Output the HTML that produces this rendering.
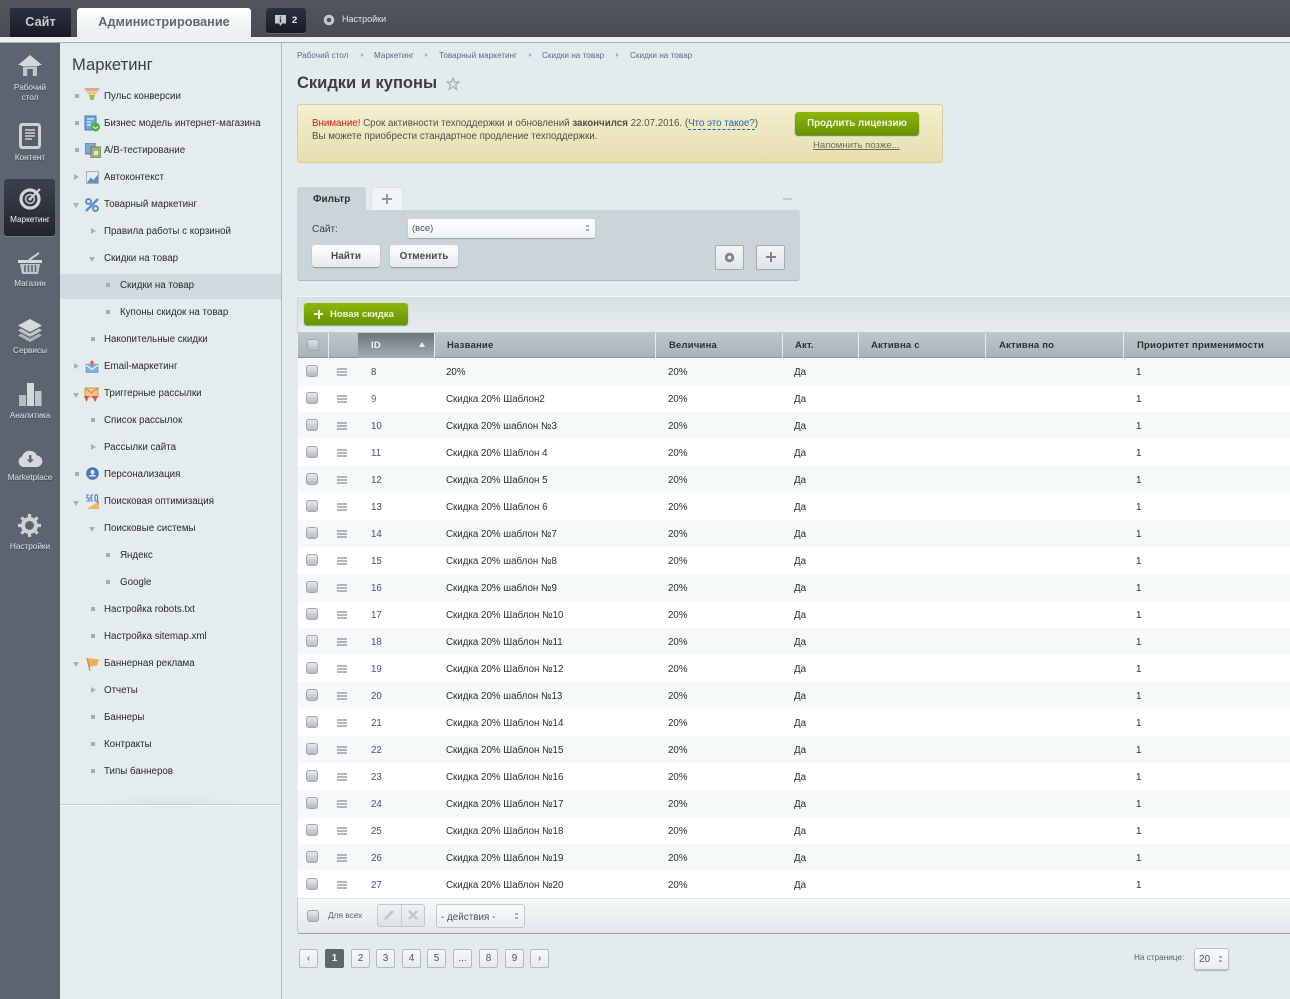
<!DOCTYPE html>
<html lang="ru"><head><meta charset="utf-8"><title>Скидки и купоны</title>
<style>
html,body{margin:0;padding:0}
body{width:1290px;height:999px;overflow:hidden;position:relative;background:#e4ebed;font-family:"Liberation Sans","Noto Sans CJK SC",sans-serif;font-size:10px;color:#2a2d2e}
div,span,svg{position:absolute;white-space:nowrap}
.n span{position:static}
.dots{background-image:radial-gradient(rgba(0,0,0,.07) .7px,transparent .8px);background-size:2px 2px}
.top{left:0;top:0;width:1290px;height:37px;background:linear-gradient(#52575f,#474c54)}
.topline{left:0;top:37px;width:1290px;height:6px;background:linear-gradient(#e8eeef,#edf2f3);border-bottom:1px solid #a6aeb2;box-sizing:border-box}
.nav{left:0;top:43px;width:60px;height:956px;background-color:#5e6673}
.navt{left:0;width:60px;text-align:center;color:#dfe3e6;font-size:8.2px;line-height:9.5px;white-space:normal;text-shadow:0 1px 0 #3c424c}
.mp{left:60px;top:43px;width:221px;height:956px;background:#e4ecee}
.mpb{left:281px;top:43px;width:1px;height:956px;background:#a9bacd}
.m{font-size:9.75px;line-height:12px;color:#282c2e;margin-top:1px}
.bl{width:4px;height:4px;background:#a6adb1}
.tr{width:0;height:0;border-left:5px solid #a9b1b5;border-top:3.5px solid transparent;border-bottom:3.5px solid transparent}
.td{width:0;height:0;border-top:5px solid #a9b1b5;border-left:3.5px solid transparent;border-right:3.5px solid transparent}
.crumb{top:50px;font-size:8.2px;line-height:11px;color:#5c6b87}
.sep{top:53px;width:0;height:0;border-left:3px solid #aab1b5;border-top:2.5px solid transparent;border-bottom:2.5px solid transparent}
.btn{background:linear-gradient(#fff,#e6ebec);border-radius:3px;box-shadow:0 1px 1px #8f999d;text-align:center;font-weight:bold;color:#4a4f52;font-size:10px}
.th{top:333px;height:25px;line-height:23px;font-weight:bold;font-size:9.5px;color:#2c3133;letter-spacing:.2px;margin-top:1px}
.ths{top:333px;width:1px;height:25px;background:#e6ecee}
.r{left:298px;width:992px;height:27px}
.c{top:1px;line-height:27px;font-size:9.75px;color:#2b2d2f}
.id{left:73px;color:#40507c}
.ck{width:12px;height:12px;box-sizing:border-box;border:1px solid #a0a8ac;border-radius:3px;background:linear-gradient(#e9eced,#b4babe)}
.dr{left:39px;top:10px;width:10px;height:1.5px;background:#b0b6b9;box-shadow:0 3px 0 #b0b6b9,0 6px 0 #b0b6b9}
.pg{top:949px;width:19px;height:19px;box-sizing:border-box;border:1px solid #b1bcc0;border-radius:2px;background:linear-gradient(#f7f9f9,#e6ebec);text-align:center;line-height:18px;font-size:10px;color:#50565a}
</style></head><body>
<div class="top dots"></div>
<div style="left:10px;top:8px;width:61px;height:29px;background:linear-gradient(#2a3140,#171b25);border-radius:2px 2px 0 0;color:#c9ced3;font-size:12.7px;font-weight:bold;text-align:center;line-height:29px">Сайт</div>
<div style="left:77px;top:8px;width:174px;height:30px;background:linear-gradient(#fff,#e8eeef);border-radius:3px 3px 0 0;color:#616a70;font-size:12.7px;font-weight:bold;text-align:center;line-height:29px">Администрирование</div>
<div style="left:266px;top:8px;width:40px;height:25px;background:linear-gradient(#2a3140,#171b25);border-radius:3px;box-shadow:0 1px 0 #666"></div>
<svg style="left:275px;top:15px" width="11" height="12" viewBox="0 0 11 12"><path d="M0 0H11V8.5H7L5.5 11 4 8.5H0Z" fill="#c5cacf"/><path d="M4.8 1.5H6.2V2.8H4.8ZM4.8 3.6H6.2V7.5H4.8Z" fill="#2a3140"/></svg>
<div style="left:292px;top:14px;color:#e8ebee;font-weight:bold;font-size:9.5px;line-height:13px">2</div>
<svg style="left:323px;top:14px" width="12" height="12" viewBox="0 0 12 12"><circle cx="6" cy="6" r="3.8" fill="none" stroke="#c3c8cc" stroke-width="3"/></svg>
<div style="left:342px;top:13px;color:#dfe3e6;font-size:9px;line-height:13px">Настройки</div>
<div class="topline"></div>

<div class="nav dots"></div>
<div style="left:4px;top:179px;width:51px;height:57px;background:linear-gradient(#3c424d,#20242d);border-radius:3px;box-shadow:0 1px 0 #70767f"></div>
<svg style="left:18px;top:55px" width="24" height="21" viewBox="0 0 24 21"><path d="M12 0L24 10H21V11H3V10H0Z" fill="#d5d9dc"/><path d="M5 11.5H19V21H14.8V14H9.2V21H5Z" fill="#c0c5c9"/></svg>
<div class="navt" style="top:83px">Рабочий<br>стол</div>
<svg style="left:19px;top:123px" width="22" height="26" viewBox="0 0 22 26"><rect x="1.5" y="1.5" width="19" height="23" rx="2" fill="#565d68" stroke="#cdd1d4" stroke-width="3"/><path d="M6 7H16M6 10H16M6 13H16M6 16H13" stroke="#cdd1d4" stroke-width="1.6"/></svg>
<div class="navt" style="top:153px">Контент</div>
<svg style="left:19px;top:187px" width="23" height="23" viewBox="0 0 23 23"><circle cx="11" cy="12" r="9" fill="none" stroke="#d2d5d8" stroke-width="3.2"/><circle cx="11" cy="12" r="4.4" fill="none" stroke="#b6babf" stroke-width="1.8"/><circle cx="11" cy="12" r="1.6" fill="#d2d5d8"/><path d="M12 11L21 2" stroke="#d2d5d8" stroke-width="2"/></svg>
<div class="navt" style="top:215px;color:#eef0f2">Маркетинг</div>
<svg style="left:18px;top:252px" width="24" height="22" viewBox="0 0 24 22"><path d="M11 8L21 1" stroke="#cdd1d4" stroke-width="2"/><rect x="0" y="8" width="24" height="3" fill="#d5d9dc"/><path d="M2 12H22L20 22H4Z" fill="#c0c5c9"/><path d="M7 13V20M10.5 13V20M14 13V20M17.5 13V20" stroke="#5e6673" stroke-width="1.6"/></svg>
<div class="navt" style="top:279px">Магазин</div>
<svg style="left:18px;top:319px" width="24" height="23" viewBox="0 0 24 23"><path d="M12 0L24 6.5 12 13 0 6.5Z" fill="#d5d9dc"/><path d="M3 9.5L12 14.5 21 9.5 24 11.5 12 18 0 11.5Z" fill="#c0c5c9"/><path d="M3 14.5L12 19.5 21 14.5 24 16.5 12 23 0 16.5Z" fill="#aeb3b8"/></svg>
<div class="navt" style="top:346px">Сервисы</div>
<svg style="left:18px;top:382px" width="24" height="24" viewBox="0 0 24 24"><rect x="1" y="13" width="7" height="11" fill="#b8bdc1"/><rect x="9" y="1" width="7" height="23" fill="#d5d9dc"/><rect x="17" y="9" width="6.5" height="15" fill="#c0c5c9"/></svg>
<div class="navt" style="top:411px">Аналитика</div>
<svg style="left:17px;top:449px" width="26" height="18" viewBox="0 0 26 18"><path d="M6 18A5.5 5.5 0 0 1 5 7.5 8 8 0 0 1 20 6.5 5.800 5.800 0 0 1 20.5 18Z" fill="#d5d9dc"/><path d="M12 6H14.400V10.5H17L13.200 14 9.5 10.5H12Z" fill="#5e6673"/></svg>
<div class="navt" style="top:473px">Marketplace</div>
<svg style="left:18px;top:514px" width="23" height="23" viewBox="0 0 23 23"><circle cx="11.5" cy="11.5" r="6.5" fill="none" stroke="#cdd1d4" stroke-width="4"/><path d="M11.5 0V5M11.5 18V23M0 11.5H5M18 11.5H23M3.400 3.400L7 7M16 16L19.600 19.600M3.400 19.600L7 16M16 7L19.600 3.400" stroke="#cdd1d4" stroke-width="3.200"/></svg>
<div class="navt" style="top:542px">Настройки</div>

<div class="mp"></div><div class="mpb"></div>
<div style="left:60px;top:274px;width:221px;height:25px;background:#cfdbdf"></div>
<div style="left:60px;top:804px;width:221px;height:1px;background:#c5d1d5"></div>
<div style="left:60px;top:805px;width:221px;height:1px;background:#f4f8f8"></div>
<div style="left:90px;top:796px;width:160px;height:8px;background:radial-gradient(ellipse at bottom,#d8e1e4,transparent 70%)"></div>
<div style="left:72px;top:54px;font-size:16.6px;line-height:21px;color:#3a3f42">Маркетинг</div>

<div class="bl" style="left:75px;top:94px"></div>
<svg style="left:84px;top:88px" width="16" height="13" viewBox="0 0 16 13"><path d="M0 0H16L14 3H2Z" fill="#e3a59a"/><path d="M2.5 3.5H13.5L11.5 6.5H4.5Z" fill="#eec85f"/><path d="M5 7H11L9.5 12H6.5Z" fill="#8fbe55"/></svg>
<div class="m" style="left:104px;top:90px">Пульс конверсии</div>
<div class="bl" style="left:75px;top:121px"></div>
<svg style="left:84px;top:115px" width="16" height="17" viewBox="0 0 16 17"><rect x="1" y="1" width="11" height="14" fill="#6fa4dc" stroke="#3f7dbe"/><path d="M3 4H10M3 7H7M3 10H7" stroke="#fff"/><circle cx="11.5" cy="12" r="4.5" fill="#4fb03e"/><path d="M9 11.5Q11.5 15 14 11.5" stroke="#fff" fill="none"/></svg>
<div class="m" style="left:104px;top:117px">Бизнес модель интернет-магазина</div>
<div class="bl" style="left:75px;top:148px"></div>
<svg style="left:85px;top:143px" width="16" height="15" viewBox="0 0 16 15"><rect x="0" y="0" width="10" height="11" fill="#7ea6d6" stroke="#4e78ad"/><rect x="6" y="4" width="10" height="11" fill="#9eb07a" stroke="#6f8450"/><rect x="9" y="8" width="4" height="4" fill="#dfe5c8"/></svg>
<div class="m" style="left:104px;top:144px">А/В-тестирование</div>
<div class="tr" style="left:74px;top:174px"></div>
<svg style="left:86px;top:171px" width="13" height="13" viewBox="0 0 13 13"><rect x=".5" y=".5" width="12" height="12" fill="#e8ecef" stroke="#a8b0b8"/><path d="M1 12L4.5 6.5 7.5 9 12 3.5V12Z" fill="#5f8fc8"/></svg>
<div class="m" style="left:104px;top:171px">Автоконтекст</div>
<div class="td" style="left:73px;top:203px"></div>
<svg style="left:85px;top:198px" width="14" height="14" viewBox="0 0 14 14"><circle cx="3.5" cy="3.5" r="2.5" fill="none" stroke="#5b8fd0" stroke-width="2"/><circle cx="10.5" cy="10.5" r="2.5" fill="none" stroke="#5b8fd0" stroke-width="2"/><path d="M1 13L13 1" stroke="#5b8fd0" stroke-width="2.5"/></svg>
<div class="m" style="left:104px;top:198px">Товарный маркетинг</div>
<div class="tr" style="left:91px;top:228px"></div>
<div class="m" style="left:104px;top:225px">Правила работы с корзиной</div>
<div class="td" style="left:89px;top:257px"></div>
<div class="m" style="left:104px;top:252px">Скидки на товар</div>
<div class="bl" style="left:106px;top:283px"></div>
<div class="m" style="left:120px;top:279px">Скидки на товар</div>
<div class="bl" style="left:106px;top:310px"></div>
<div class="m" style="left:120px;top:306px">Купоны скидок на товар</div>
<div class="bl" style="left:91px;top:337px"></div>
<div class="m" style="left:104px;top:333px">Накопительные скидки</div>
<div class="tr" style="left:74px;top:363px"></div>
<svg style="left:85px;top:359px" width="14" height="14" viewBox="0 0 14 14"><path d="M1 5H13V14H1Z" fill="#7fb2e2" stroke="#5a8fc4" stroke-width=".6"/><path d="M1 6L7 10.5 13 6" stroke="#fff" fill="none"/><path d="M7 1L9.5 4H8V7H6V4H4.5Z" fill="#d9664d"/></svg>
<div class="m" style="left:104px;top:360px">Email-маркетинг</div>
<div class="td" style="left:73px;top:393px"></div>
<svg style="left:84px;top:387px" width="15" height="15" viewBox="0 0 15 15"><rect x="1" y="1" width="13" height="9" fill="#f0c48b" stroke="#d89a4f"/><path d="M1 1L7.5 6 14 1" stroke="#d0803f" fill="none"/><path d="M0 9H5L2.5 15ZM8 9H14L11 15Z" fill="#d8503e"/></svg>
<div class="m" style="left:104px;top:387px">Триггерные рассылки</div>
<div class="bl" style="left:91px;top:418px"></div>
<div class="m" style="left:104px;top:414px">Список рассылок</div>
<div class="tr" style="left:91px;top:444px"></div>
<div class="m" style="left:104px;top:441px">Рассылки сайта</div>
<div class="bl" style="left:75px;top:472px"></div>
<svg style="left:86px;top:467px" width="13" height="13" viewBox="0 0 13 13"><circle cx="6.5" cy="6.5" r="6.300" fill="#4a76c0"/><circle cx="6.5" cy="5" r="2" fill="#e8eef7"/><path d="M2.5 9.5Q6.5 5.5 10.5 9.5Z" fill="#e8eef7"/></svg>
<div class="m" style="left:104px;top:468px">Персонализация</div>
<div class="td" style="left:73px;top:501px"></div>
<svg style="left:86px;top:494px" width="13" height="15" viewBox="0 0 13 15"><path d="M1 15L13 7V15Z" fill="#edb765"/><path d="M3 1H1V4H3V7H.5M5 1V7M5 1H7M5 4H6.5M5 7H7M9 1H11.5V7H9ZM11 7L12.5 9" stroke="#4a7cc0" fill="none" stroke-width="1.100"/></svg>
<div class="m" style="left:104px;top:495px">Поисковая оптимизация</div>
<div class="td" style="left:89px;top:527px"></div>
<div class="m" style="left:104px;top:522px">Поисковые системы</div>
<div class="bl" style="left:106px;top:553px"></div>
<div class="m" style="left:120px;top:549px">Яндекс</div>
<div class="bl" style="left:106px;top:580px"></div>
<div class="m" style="left:120px;top:576px">Google</div>
<div class="bl" style="left:91px;top:607px"></div>
<div class="m" style="left:104px;top:603px">Настройка robots.txt</div>
<div class="bl" style="left:91px;top:634px"></div>
<div class="m" style="left:104px;top:630px">Настройка sitemap.xml</div>
<div class="td" style="left:73px;top:662px"></div>
<svg style="left:86px;top:657px" width="14" height="14" viewBox="0 0 14 14"><path d="M1 1L13 2.5 11 8.5 3 10Z" fill="#f1ae5a"/><path d="M1 1L4 14" stroke="#c58a45" stroke-width="1.200"/></svg>
<div class="m" style="left:104px;top:657px">Баннерная реклама</div>
<div class="tr" style="left:91px;top:687px"></div>
<div class="m" style="left:104px;top:684px">Отчеты</div>
<div class="bl" style="left:91px;top:715px"></div>
<div class="m" style="left:104px;top:711px">Баннеры</div>
<div class="bl" style="left:91px;top:742px"></div>
<div class="m" style="left:104px;top:738px">Контракты</div>
<div class="bl" style="left:91px;top:769px"></div>
<div class="m" style="left:104px;top:765px">Типы баннеров</div>

<div class="crumb" style="left:297px">Рабочий стол</div><div class="sep" style="left:361px"></div>
<div class="crumb" style="left:374px">Маркетинг</div><div class="sep" style="left:425px"></div>
<div class="crumb" style="left:439px">Товарный маркетинг</div><div class="sep" style="left:529px"></div>
<div class="crumb" style="left:542px">Скидки на товар</div><div class="sep" style="left:616px"></div>
<div class="crumb" style="left:630px">Скидки на товар</div>
<div style="left:297px;top:73px;font-size:16.5px;line-height:20px;font-weight:bold;color:#3a3f42">Скидки и купоны</div>
<svg style="left:446px;top:77px" width="14" height="14" viewBox="0 0 14 14"><path d="M7 1L8.7 5H13L9.6 7.8 10.8 12.5 7 9.8 3.200 12.5 4.400 7.8 1 5H5.300Z" fill="#dfe5e7" stroke="#a6afb3" stroke-width="1.200"/></svg>

<div style="left:297px;top:104px;width:646px;height:59px;box-sizing:border-box;background:linear-gradient(#f4efcf,#e6dfaf);border:1px solid #d6cf9e;border-radius:3px"></div>
<div class="n" style="left:312px;top:117px;font-size:9.76px;line-height:13px;color:#50504a"><span style="color:#e01414">Внимание!</span> Срок активности техподдержки и обновлений <b>закончился</b> 22.07.2016. (<span style="color:#2067b0;border-bottom:1px dashed #2067b0">Что это такое?</span>)</div>
<div style="left:312px;top:131px;font-size:9.75px;line-height:12px;color:#50504a">Вы можете приобрести стандартное продление техподдержки.</div>
<div style="left:795px;top:112px;width:124px;height:23px;background:linear-gradient(#8db70c,#689203);border-radius:3px;box-shadow:0 1px 1px #6c7a3a;color:#f2f7dc;font-weight:bold;font-size:9.8px;line-height:23px;text-align:center">Продлить лицензию</div>
<div style="left:813px;top:140px;font-size:9.6px;line-height:12px;color:#6f6e5e;text-decoration:underline">Напомнить позже...</div>

<div class="dots" style="left:297px;top:187px;width:69px;height:24px;background-color:#d0dade;border-radius:3px 3px 0 0"></div>
<div style="left:313px;top:193px;font-weight:bold;font-size:10px;line-height:13px;color:#2e3234">Фильтр</div>
<div style="left:372px;top:188px;width:30px;height:23px;background:#f1f5f6;border-radius:3px 3px 0 0;box-shadow:0 0 1px #b5c0c4"></div>
<div style="left:382px;top:198px;width:10px;height:2px;background:#8f979b"></div><div style="left:386px;top:194px;width:2px;height:10px;background:#8f979b"></div>
<div style="left:783px;top:198px;width:9px;height:2px;background:#c3cccf"></div>
<div class="dots" style="left:297px;top:210px;width:503px;height:70px;background-color:#d0dade;border-radius:0 3px 3px 3px;box-shadow:0 1px 0 #aeb9bd"></div>
<div style="left:312px;top:223px;font-size:10px;line-height:13px;color:#3c4244">Сайт:</div>
<div style="left:408px;top:219px;width:187px;height:19px;background:linear-gradient(#fff,#eef1f2);border-radius:2px;box-shadow:0 1px 1px #98a3a7;font-size:9.5px;line-height:19px;text-indent:4px;color:#4d5356">(все)</div>
<div style="left:586px;top:225px;width:3px;height:2px;background:#a8aeb1;box-shadow:0 4px 0 #a8aeb1"></div>
<div class="btn" style="left:312px;top:245px;width:68px;height:22px;line-height:23px">Найти</div>
<div class="btn" style="left:390px;top:245px;width:68px;height:22px;line-height:23px">Отменить</div>
<div style="left:715px;top:245px;width:29px;height:25px;box-sizing:border-box;background:linear-gradient(#f3f6f6,#dfe5e7);border:1px solid #a3adb1;border-radius:2px"></div>
<svg style="left:724px;top:252px" width="11" height="11" viewBox="0 0 11 11"><circle cx="5.5" cy="5.5" r="3.300" fill="none" stroke="#7d8589" stroke-width="2.800"/></svg>
<div style="left:756px;top:245px;width:29px;height:25px;box-sizing:border-box;background:linear-gradient(#f3f6f6,#dfe5e7);border:1px solid #a3adb1;border-radius:2px"></div>
<div style="left:766px;top:256px;width:10px;height:2px;background:#7d8589"></div><div style="left:770px;top:252px;width:2px;height:10px;background:#7d8589"></div>

<div style="left:297px;top:296px;width:993px;height:37px;box-sizing:border-box;background:linear-gradient(#d8e0e3,#e6ecee);border-top:1px solid #f2f6f6;border-left:1px solid #cdd6d9;border-bottom:1px solid #c3cdd1"></div>
<div style="left:304px;top:303px;width:104px;height:22px;background:linear-gradient(#8db70c,#689203);border-radius:3px;box-shadow:0 1px 1px #8a9a5a"></div>
<div style="left:314px;top:313px;width:9px;height:2px;background:#f0f5df"></div><div style="left:317.5px;top:309.5px;width:2px;height:9px;background:#f0f5df"></div>
<div style="left:330px;top:308px;color:#eef5d4;font-weight:bold;font-size:9.5px;line-height:13px">Новая скидка</div>

<div style="left:298px;top:333px;width:992px;height:25px;background:linear-gradient(#bcc7cb,#a8b4b8);border-bottom:1px solid #8c989c;box-sizing:border-box"></div>
<div style="left:358px;top:333px;width:76px;height:25px;background:linear-gradient(#6b757b,#a3afb3)"></div>
<div class="ck" style="left:307px;top:339px;background:linear-gradient(#dde1e3,#b5bbbe)"></div>
<div class="ths" style="left:328px"></div><div class="ths" style="left:434px"></div><div class="ths" style="left:655px"></div><div class="ths" style="left:782px"></div><div class="ths" style="left:858px"></div><div class="ths" style="left:985px"></div><div class="ths" style="left:1123px"></div>
<div class="th" style="left:371px;color:#f0f3f4">ID</div>
<div style="left:419px;top:342px;width:0;height:0;border-bottom:5px solid #e8ecee;border-left:3.5px solid transparent;border-right:3.5px solid transparent"></div>
<div class="th" style="left:447px">Название</div><div class="th" style="left:669px">Величина</div><div class="th" style="left:795px">Акт.</div><div class="th" style="left:871px">Активна с</div><div class="th" style="left:999px">Активна по</div><div class="th" style="left:1137px">Приоритет применимости</div>

<div class="r" style="top:358px;background:#f5f9f9"><div class="ck" style="left:8px;top:7px"></div><div class="dr"></div><div class="c id">8</div><div class="c" style="left:148px">20%</div><div class="c" style="left:370px">20%</div><div class="c" style="left:496px">Да</div><div class="c" style="left:838px">1</div></div>
<div class="r" style="top:385px;background:#fff"><div class="ck" style="left:8px;top:7px"></div><div class="dr"></div><div class="c id" style="color:#6a5a80">9</div><div class="c" style="left:148px">Скидка 20% Шаблон2</div><div class="c" style="left:370px">20%</div><div class="c" style="left:496px">Да</div><div class="c" style="left:838px">1</div></div>
<div class="r" style="top:412px;background:#f5f9f9"><div class="ck" style="left:8px;top:7px"></div><div class="dr"></div><div class="c id">10</div><div class="c" style="left:148px">Скидка 20% шаблон №3</div><div class="c" style="left:370px">20%</div><div class="c" style="left:496px">Да</div><div class="c" style="left:838px">1</div></div>
<div class="r" style="top:439px;background:#fff"><div class="ck" style="left:8px;top:7px"></div><div class="dr"></div><div class="c id">11</div><div class="c" style="left:148px">Скидка 20% Шаблон 4</div><div class="c" style="left:370px">20%</div><div class="c" style="left:496px">Да</div><div class="c" style="left:838px">1</div></div>
<div class="r" style="top:466px;background:#f5f9f9"><div class="ck" style="left:8px;top:7px"></div><div class="dr"></div><div class="c id">12</div><div class="c" style="left:148px">Скидка 20% Шаблон 5</div><div class="c" style="left:370px">20%</div><div class="c" style="left:496px">Да</div><div class="c" style="left:838px">1</div></div>
<div class="r" style="top:493px;background:#fff"><div class="ck" style="left:8px;top:7px"></div><div class="dr"></div><div class="c id">13</div><div class="c" style="left:148px">Скидка 20% Шаблон 6</div><div class="c" style="left:370px">20%</div><div class="c" style="left:496px">Да</div><div class="c" style="left:838px">1</div></div>
<div class="r" style="top:520px;background:#f5f9f9"><div class="ck" style="left:8px;top:7px"></div><div class="dr"></div><div class="c id">14</div><div class="c" style="left:148px">Скидка 20% шаблон №7</div><div class="c" style="left:370px">20%</div><div class="c" style="left:496px">Да</div><div class="c" style="left:838px">1</div></div>
<div class="r" style="top:547px;background:#fff"><div class="ck" style="left:8px;top:7px"></div><div class="dr"></div><div class="c id">15</div><div class="c" style="left:148px">Скидка 20% шаблон №8</div><div class="c" style="left:370px">20%</div><div class="c" style="left:496px">Да</div><div class="c" style="left:838px">1</div></div>
<div class="r" style="top:574px;background:#f5f9f9"><div class="ck" style="left:8px;top:7px"></div><div class="dr"></div><div class="c id">16</div><div class="c" style="left:148px">Скидка 20% шаблон №9</div><div class="c" style="left:370px">20%</div><div class="c" style="left:496px">Да</div><div class="c" style="left:838px">1</div></div>
<div class="r" style="top:601px;background:#fff"><div class="ck" style="left:8px;top:7px"></div><div class="dr"></div><div class="c id">17</div><div class="c" style="left:148px">Скидка 20% Шаблон №10</div><div class="c" style="left:370px">20%</div><div class="c" style="left:496px">Да</div><div class="c" style="left:838px">1</div></div>
<div class="r" style="top:628px;background:#f5f9f9"><div class="ck" style="left:8px;top:7px"></div><div class="dr"></div><div class="c id">18</div><div class="c" style="left:148px">Скидка 20% Шаблон №11</div><div class="c" style="left:370px">20%</div><div class="c" style="left:496px">Да</div><div class="c" style="left:838px">1</div></div>
<div class="r" style="top:655px;background:#fff"><div class="ck" style="left:8px;top:7px"></div><div class="dr"></div><div class="c id">19</div><div class="c" style="left:148px">Скидка 20% Шаблон №12</div><div class="c" style="left:370px">20%</div><div class="c" style="left:496px">Да</div><div class="c" style="left:838px">1</div></div>
<div class="r" style="top:682px;background:#f5f9f9"><div class="ck" style="left:8px;top:7px"></div><div class="dr"></div><div class="c id">20</div><div class="c" style="left:148px">Скидка 20% шаблон №13</div><div class="c" style="left:370px">20%</div><div class="c" style="left:496px">Да</div><div class="c" style="left:838px">1</div></div>
<div class="r" style="top:709px;background:#fff"><div class="ck" style="left:8px;top:7px"></div><div class="dr"></div><div class="c id">21</div><div class="c" style="left:148px">Скидка 20% Шаблон №14</div><div class="c" style="left:370px">20%</div><div class="c" style="left:496px">Да</div><div class="c" style="left:838px">1</div></div>
<div class="r" style="top:736px;background:#f5f9f9"><div class="ck" style="left:8px;top:7px"></div><div class="dr"></div><div class="c id">22</div><div class="c" style="left:148px">Скидка 20% Шаблон №15</div><div class="c" style="left:370px">20%</div><div class="c" style="left:496px">Да</div><div class="c" style="left:838px">1</div></div>
<div class="r" style="top:763px;background:#fff"><div class="ck" style="left:8px;top:7px"></div><div class="dr"></div><div class="c id">23</div><div class="c" style="left:148px">Скидка 20% Шаблон №16</div><div class="c" style="left:370px">20%</div><div class="c" style="left:496px">Да</div><div class="c" style="left:838px">1</div></div>
<div class="r" style="top:790px;background:#f5f9f9"><div class="ck" style="left:8px;top:7px"></div><div class="dr"></div><div class="c id">24</div><div class="c" style="left:148px">Скидка 20% Шаблон №17</div><div class="c" style="left:370px">20%</div><div class="c" style="left:496px">Да</div><div class="c" style="left:838px">1</div></div>
<div class="r" style="top:817px;background:#fff"><div class="ck" style="left:8px;top:7px"></div><div class="dr"></div><div class="c id">25</div><div class="c" style="left:148px">Скидка 20% Шаблон №18</div><div class="c" style="left:370px">20%</div><div class="c" style="left:496px">Да</div><div class="c" style="left:838px">1</div></div>
<div class="r" style="top:844px;background:#f5f9f9"><div class="ck" style="left:8px;top:7px"></div><div class="dr"></div><div class="c id">26</div><div class="c" style="left:148px">Скидка 20% Шаблон №19</div><div class="c" style="left:370px">20%</div><div class="c" style="left:496px">Да</div><div class="c" style="left:838px">1</div></div>
<div class="r" style="top:871px;background:#fff"><div class="ck" style="left:8px;top:7px"></div><div class="dr"></div><div class="c id">27</div><div class="c" style="left:148px">Скидка 20% Шаблон №20</div><div class="c" style="left:370px">20%</div><div class="c" style="left:496px">Да</div><div class="c" style="left:838px">1</div></div>

<div style="left:297px;top:898px;width:993px;height:36px;box-sizing:border-box;background:linear-gradient(#f5f8f8,#e3e9eb);border-top:1px solid #e0e6e8;border-left:1px solid #c3cdd1;border-bottom:1px solid #99a4a8;border-radius:0 0 0 3px"></div>
<div class="ck" style="left:307px;top:910px"></div>
<div style="left:328px;top:910px;font-size:8.3px;line-height:11px;color:#5c6366">Для всех</div>
<div style="left:377px;top:904px;width:48px;height:23px;box-sizing:border-box;background:linear-gradient(#eef2f3,#dce3e5);border:1px solid #bfc8cb;border-radius:3px"></div>
<div style="left:401px;top:905px;width:1px;height:21px;background:#c5ced1"></div>
<svg style="left:383px;top:909px" width="12" height="12" viewBox="0 0 12 12"><path d="M1 11L2 8 9 1 11 3 4 10Z" fill="#c0c8cb"/></svg>
<svg style="left:408px;top:910px" width="10" height="10" viewBox="0 0 10 10"><path d="M1 1L9 9M9 1L1 9" stroke="#bcc5c8" stroke-width="2.200"/></svg>
<div style="left:436px;top:904px;width:89px;height:24px;box-sizing:border-box;background:linear-gradient(#fbfcfc,#e8edee);border:1px solid #c0c9cc;border-radius:3px;font-size:9.9px;line-height:24px;text-indent:4px;color:#4f5558"><span style="left:4px;top:1px;text-indent:0">- действия -</span></div>
<div style="left:515px;top:913px;width:3px;height:2px;background:#a8aeb1;box-shadow:0 4px 0 #a8aeb1"></div>

<div class="pg" style="left:299px">‹</div>
<div class="pg" style="left:325px;background:#5e666b;border-color:#5e666b;color:#f0f2f3;font-weight:bold">1</div>
<div class="pg" style="left:351px">2</div><div class="pg" style="left:376px">3</div><div class="pg" style="left:402px">4</div><div class="pg" style="left:427px">5</div><div class="pg" style="left:453px">...</div><div class="pg" style="left:479px">8</div><div class="pg" style="left:505px">9</div><div class="pg" style="left:530px">›</div>
<div style="left:1134px;top:952px;font-size:8.2px;line-height:12px;color:#5c6366">На странице:</div>
<div style="left:1194px;top:948px;width:35px;height:22px;box-sizing:border-box;background:linear-gradient(#fbfcfc,#e8edee);border:1px solid #bcc5c8;border-radius:3px;box-shadow:0 1px 1px #a5afb3;font-size:10px;line-height:22px;text-indent:4px;color:#4f5558">20</div>
<div style="left:1219px;top:956px;width:3px;height:2px;background:#a8aeb1;box-shadow:0 4px 0 #a8aeb1"></div>
</body></html>
